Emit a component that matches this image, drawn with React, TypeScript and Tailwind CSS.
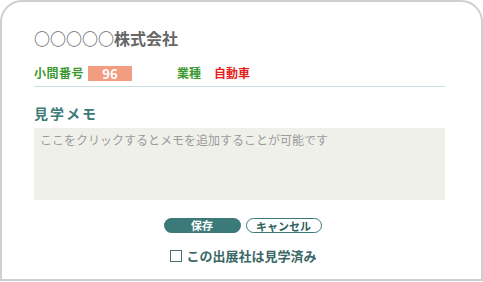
import React from "react";

export default function App() {
  return (
    <div
      className="w-[483px] h-[282px] bg-white overflow-hidden"
      style={{ fontFamily: '"Noto Sans CJK JP", "Noto Sans", sans-serif' }}
    >
      <div className="w-full h-[281px] border-2 border-[#cfcfcf] rounded-t-[22px] bg-white pl-[32px] pr-[36px] pt-[25px]">
        <div className="text-[16px] leading-[22px] font-bold text-[#666666]">
          ○○○○○株式会社
        </div>
        <div className="mt-[16px] flex items-center h-[16px] text-[12px] font-bold">
          <span className="text-[#3b9a2e] tracking-[0.5px]">小間番号</span>
          <span className="ml-[4px] w-[44px] h-[15px] bg-[#f29c80] text-white text-[13px] leading-[15px] flex items-center justify-center">
            96
          </span>
          <span className="ml-[45px] text-[#3b9a2e]">業種</span>
          <span className="ml-[13px] text-[#e3211c]">自動車</span>
        </div>
        <div className="mt-[5px] border-t border-[#c9e1e4]" />
        <div className="mt-[16px] text-[14px] leading-[20px] font-bold text-[#3d7a78] tracking-[2px]">
          見学メモ
        </div>
        <textarea
          className="mt-[5px] block w-full h-[72px] bg-[#f0f0eb] resize-none outline-none px-[6px] pt-[3px] text-[12px] leading-[18px] placeholder:text-[#9b9b9b]"
          placeholder="ここをクリックするとメモを追加することが可能です"
        />
        <div className="mt-[18px] flex justify-center gap-[5px] pl-[6px]">
          <button className="w-[77px] h-[15px] rounded-full bg-[#3b7a78] text-white text-[11px] leading-[15px] font-bold">
            保存
          </button>
          <button className="w-[76px] h-[15px] rounded-full border-[1.5px] border-[#3b7a78] bg-white text-[#2f5f5e] text-[11px] leading-[12px] font-bold">
            キャンセル
          </button>
        </div>
        <div className="mt-[16px] flex justify-center items-center pl-[8px]">
          <span className="w-[12px] h-[12px] border border-[#4a7070] bg-white" />
          <span className="ml-[4px] text-[13px] leading-[14px] font-bold text-[#3b6867]">
            この出展社は見学済み
          </span>
        </div>
      </div>
    </div>
  );
}
